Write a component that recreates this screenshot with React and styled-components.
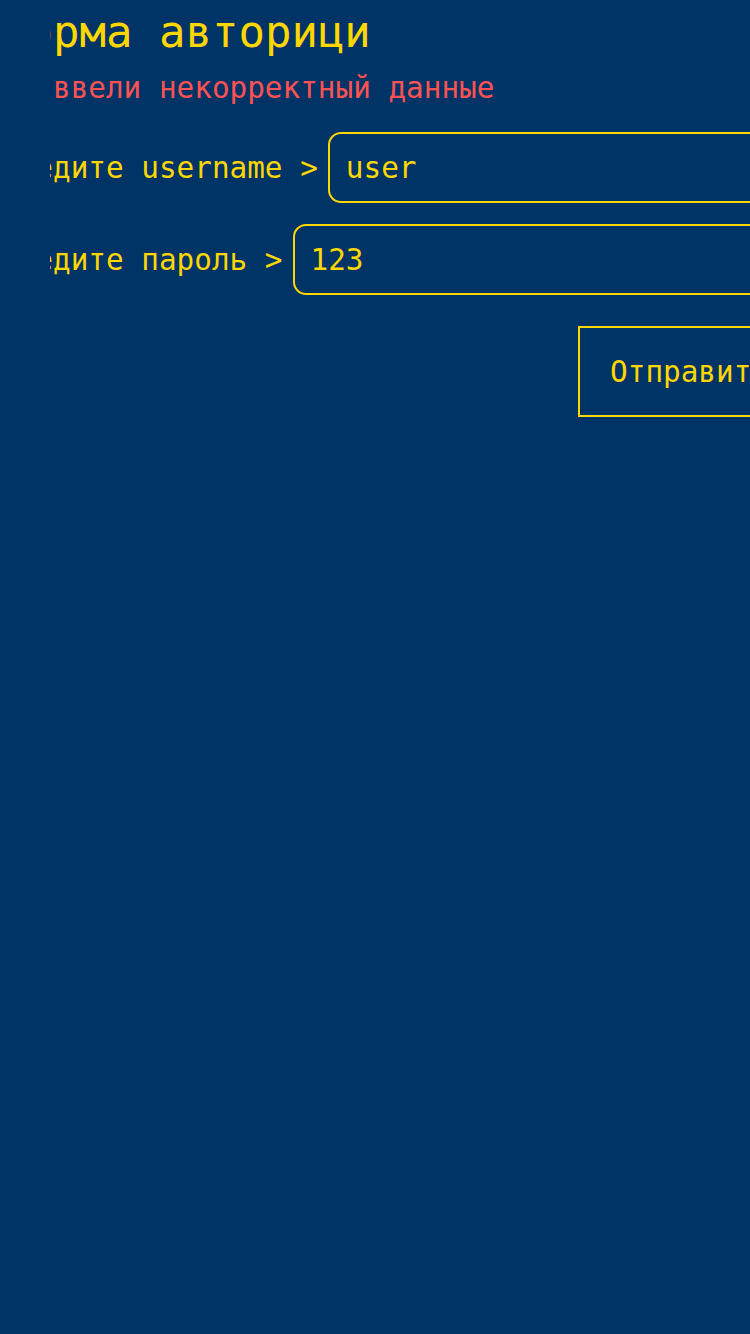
import styled, { createGlobalStyle } from "styled-components";

const GlobalStyle = createGlobalStyle`
  html, body {
    margin: 0;
    padding: 0;
    background-color: #003366;
    overflow: hidden;
  }
  body {
    min-height: 1334px;
    font-family: "DejaVu Sans Mono", monospace;
    font-size: 22pt;
    color: #ffd700;
  }
`;

const Screen = styled.div`
  width: 801px;
  padding-top: 6px;
  display: flex;
  flex-direction: column;
  /* the left 50px of the form is cut off in the layout */
  clip-path: inset(0 0 0 50px);
`;

const Title = styled.h1`
  margin: 0 0 14px;
  font-size: 1.5em;
  font-weight: normal;
  line-height: normal;
  white-space: pre;
`;

const ErrorText = styled.p`
  margin: 0 0 27px;
  color: #ff5252;
  white-space: pre;
`;

const Form = styled.form`
  display: flex;
  flex-direction: column;
  gap: 21px;
`;

const Row = styled.label`
  display: flex;
  align-items: center;
  gap: 10px;
`;

const LabelText = styled.span`
  white-space: pre;
  flex-shrink: 0;
`;

const Input = styled.input`
  flex: 1;
  min-width: 0;
  box-sizing: border-box;
  height: 71px;
  padding: 0 16px;
  border: 2px solid #ffd700;
  border-radius: 13px;
  background: transparent;
  color: #ffd700;
  font: inherit;
  outline: none;
`;

const Actions = styled.div`
  display: flex;
  justify-content: flex-end;
  margin-top: 10px;
`;

const Button = styled.button`
  box-sizing: border-box;
  height: 91px;
  padding: 0 30px;
  border: 2px solid #ffd700;
  border-radius: 0;
  background: transparent;
  color: #ffd700;
  font: inherit;
  white-space: pre;
  cursor: pointer;
`;

function App() {
  return (
    <>
      <GlobalStyle />
      <Screen>
        <Title>Форма авторици</Title>
        <ErrorText>Вы ввели некорректный данные</ErrorText>
        <Form onSubmit={(e) => e.preventDefault()}>
          <Row>
            <LabelText>Введите username &gt;</LabelText>
            <Input type="text" defaultValue="user" />
          </Row>
          <Row>
            <LabelText>Введите пароль &gt;</LabelText>
            <Input type="text" defaultValue="123" />
          </Row>
          <Actions>
            <Button type="submit">Отправить</Button>
          </Actions>
        </Form>
      </Screen>
    </>
  );
}

export default App;
